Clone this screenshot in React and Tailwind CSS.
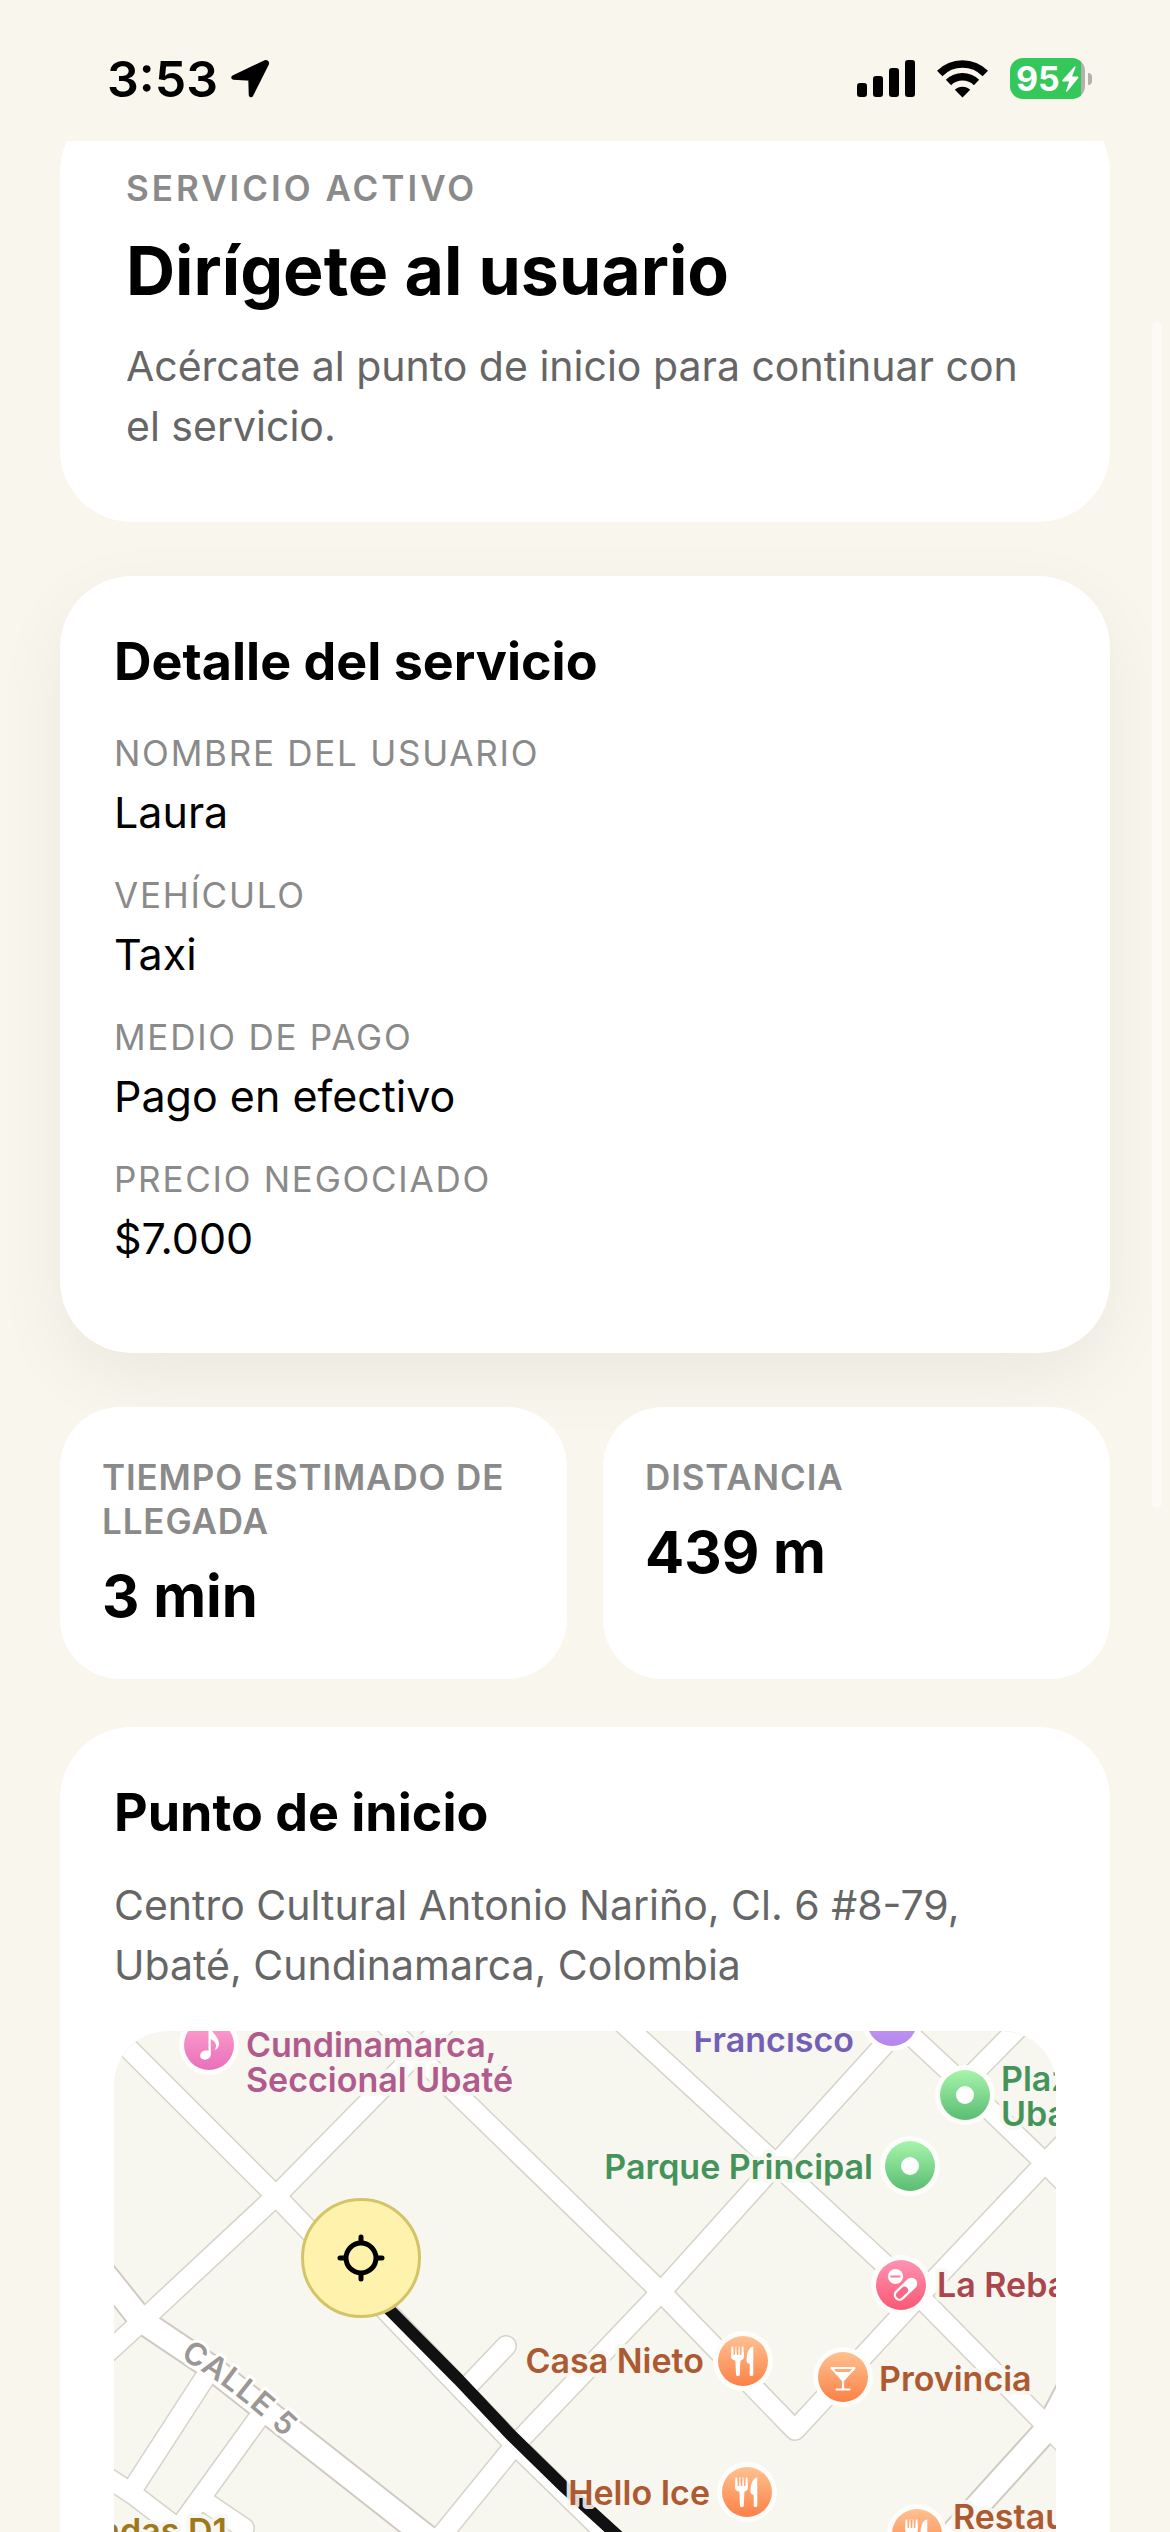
import React from 'react';

const details = [
  { label: 'Nombre del usuario', value: 'Laura' },
  { label: 'Vehículo', value: 'Taxi' },
  { label: 'Medio de pago', value: 'Pago en efectivo' },
  { label: 'Precio negociado', value: '$7.000' },
];

const stats = [
  { label: 'Tiempo estimado de llegada', value: '3 min' },
  { label: 'Distancia', value: '439 m' },
];

// Street centre lines, in map units
const streets = [
  'M-25 -22 L162 165 L401 414 L560 569',
  'M340 -16 L162 165 L28 290 L-20 334',
  'M262 -16 L547 261 L681 399 L805 265 L931 132 L960 102',
  'M310 526 L401 414 L547 261 L662 133 L790 -8',
  'M500 -16 L662 133 L805 265 L934 396 L965 428',
  'M775 -16 L849 53 L931 132 L965 166',
  'M849 53 L917 -16',
  'M392 315 L351 358',
  'M90 348 L22 453',
  'M143 389 L65 497',
  'M-12 443 L20 464 L80 510',
  'M90 470 L130 497',
];

const avenues = [
  'M-20 230 L28 290 L95 335 L151 379 L305 500 L345 531',
  'M960 348 L934 397 L867 471 L810 535',
];

const pins = [
  { x: 95, y: 14, fill: 'url(#pinPink)', icon: 'music' },
  { x: 778, y: -10, fill: 'url(#pinPurple)', icon: 'none' },
  { x: 851, y: 64, fill: 'url(#pinGreen)', icon: 'dot' },
  { x: 796, y: 135, fill: 'url(#pinGreen)', icon: 'dot' },
  { x: 787, y: 254, fill: 'url(#pinRed)', icon: 'pills' },
  { x: 629, y: 330, fill: 'url(#pinOrange)', icon: 'food' },
  { x: 729, y: 346, fill: 'url(#pinOrange)', icon: 'drink' },
  { x: 633, y: 461, fill: 'url(#pinOrange)', icon: 'food' },
  { x: 803, y: 503, fill: 'url(#pinOrange)', icon: 'food' },
];

const places = [
  { x: 132, y: 26, text: 'Cundinamarca,', fill: '#b15a8c' },
  { x: 132, y: 61, text: 'Seccional Ubaté', fill: '#b15a8c' },
  { x: 740, y: 21, text: 'Francisco', fill: '#745fb6', anchor: 'end' },
  { x: 887, y: 60, text: 'Plaza', fill: '#449459' },
  { x: 887, y: 95, text: 'Ubaté', fill: '#449459' },
  { x: 759, y: 148, text: 'Parque Principal', fill: '#449459', anchor: 'end' },
  { x: 823, y: 266, text: 'La Rebaja', fill: '#ab464c' },
  { x: 590, y: 342, text: 'Casa Nieto', fill: '#ad5a30', anchor: 'end' },
  { x: 765, y: 360, text: 'Provincia', fill: '#ad5a30' },
  { x: 596, y: 474, text: 'Hello Ice', fill: '#ad5a30', anchor: 'end' },
  { x: 839, y: 498, text: 'Restaurante', fill: '#ad5a30' },
  { x: 113, y: 512, text: 'Tiendas D1', fill: '#a0781c', anchor: 'end' },
];

function PinIcon({ name }) {
  if (name === 'dot') return <circle r="9" fill="#fff" />;
  if (name === 'music') {
    return (
      <g fill="#fff">
        <ellipse cx="-3.5" cy="10" rx="5.5" ry="4.5" transform="rotate(-20 -3.5 10)" />
        <path d="M-0.500 -18 H1.800 C2.500 -11 10 -9 10 -1 C10 2 8 4.500 5.500 5 C9 0 6 -4 1.800 -6 V10 H-0.500 Z" />
      </g>
    );
  }
  if (name === 'food') {
    return (
      <g fill="#fff">
        <path d="M-11.500 -14.500 H-9.800 L-9.300 -6 H-8 L-7.500 -14.500 H-3.500 L-3 -6 H-1.700 L-1.200 -14.500 H0.500 L1 -5 C1 -2 -0.500 -1 -2.600 -0.300 L-3.200 14 C-3.400 15.500 -6.800 15.500 -7 14 L-7.600 -0.300 C-10.200 -1 -12 -2 -12 -5 Z" />
        <path d="M-6.600 -14.500 L-6.200 -6 H-4.800 L-4.400 -14.500 Z" fill="#fda76f" />
        <path d="M10.300 -14.500 V14 C10 15.300 7 15.300 6.700 14 V3 C5 2.500 3.500 1.500 3.500 0 C3.500 -8 6 -14.500 10.300 -14.500 Z" />
      </g>
    );
  }
  if (name === 'drink') {
    return (
      <g fill="none" stroke="#fff" strokeWidth="2.200" strokeLinejoin="round" strokeLinecap="round">
        <path d="M-11.500 -9 H11.500 L0 3.500 Z" />
        <path d="M-7.500 -5 H7.500 L0 3.500 Z" fill="#fff" stroke="none" />
        <path d="M0 3 V12 M-6.500 12.500 H6.500" />
      </g>
    );
  }
  if (name === 'pills') {
    return (
      <g>
        <circle cx="-5.500" cy="-8.500" r="7.600" fill="#fff" />
        <path d="M-10.500 -8.500 H-0.500" stroke="#ff7c9a" strokeWidth="1.800" />
        <path d="M-1.500 10 L10.500 -1.500" stroke="#fff" strokeWidth="11.500" strokeLinecap="round" />
        <path d="M-1.500 10 L3.500 5.200" stroke="#fb6683" strokeWidth="7" strokeLinecap="round" />
      </g>
    );
  }
  return null;
}

function Gradient({ id, from, to }) {
  return (
    <linearGradient id={id} x1="0" y1="0" x2="0" y2="1">
      <stop offset="0" stopColor={from} />
      <stop offset="1" stopColor={to} />
    </linearGradient>
  );
}

function RouteMap() {
  return (
    <svg
      viewBox="0 0 942 780"
      preserveAspectRatio="xMidYMin slice"
      className="block w-full h-[780px] bg-[#f7f6ef]"
      role="img"
      aria-label="Mapa del punto de inicio"
    >
      <defs>
        <Gradient id="pinPink" from="#ffa2cc" to="#e86fbb" />
        <Gradient id="pinPurple" from="#d3a8ff" to="#b486ed" />
        <Gradient id="pinGreen" from="#a8f4ac" to="#59bd72" />
        <Gradient id="pinRed" from="#ff93b3" to="#f95873" />
        <Gradient id="pinOrange" from="#ffc191" to="#fb8146" />
        <path id="calle5" d="M66 327 Q120 358 174 410" />
      </defs>

      {/* Street casings first, then the white surface on top */}
      <g fill="none" strokeLinejoin="round" strokeLinecap="round">
        {avenues.map((d) => (
          <path key={d} d={d} stroke="#d0cac2" strokeWidth="27" />
        ))}
        {streets.map((d) => (
          <path key={d} d={d} stroke="#d6d3ca" strokeWidth="22" />
        ))}
        {avenues.map((d) => (
          <path key={d} d={d} stroke="#fff" strokeWidth="23" />
        ))}
        {streets.map((d) => (
          <path key={d} d={d} stroke="#fff" strokeWidth="19" />
        ))}
      </g>

      {/* Route */}
      <path d="M247 250 L344 348 L396 403 L449 455 L560 556" fill="none" stroke="#111" strokeWidth="12" />

      <g fontFamily="Inter, sans-serif" stroke="#f8f7f2" strokeLinejoin="round" style={{ paintOrder: 'stroke' }}>
        <text fontSize="31" fontWeight="600" letterSpacing="1" fill="#9b9794" stroke="#fff" strokeWidth="6">
          <textPath href="#calle5">CALLE 5</textPath>
        </text>
        {places.map((p) => (
          <text
            key={p.text}
            x={p.x}
            y={p.y}
            fontSize="34"
            fontWeight="600"
            textAnchor={p.anchor || 'start'}
            fill={p.fill}
            strokeWidth="8"
            strokeOpacity="0.9"
          >
            {p.text}
          </text>
        ))}
      </g>

      {pins.map((p) => (
        <g key={`${p.x}-${p.y}`} transform={`translate(${p.x} ${p.y})`}>
          <circle r="30" fill="#fdfdfb" />
          <circle r="25" fill={p.fill} />
          <PinIcon name={p.icon} />
        </g>
      ))}

      {/* Pickup marker */}
      <g transform="translate(247 227)">
        <circle r="58.500" fill="#fff2ac" stroke="#d4c468" strokeWidth="3" />
        <g fill="none" stroke="#000" strokeWidth="5" strokeLinecap="round">
          <circle r="15" />
          <path d="M0 -21 V-16 M0 21 V16 M-21 0 H-16 M21 0 H16" />
        </g>
      </g>
    </svg>
  );
}

function StatusBar() {
  return (
    <header className="flex h-[141px] shrink-0 items-center justify-between pl-[107px] pr-[78px] pt-4">
      <div className="flex items-center gap-3">
        <span className="text-[50px] leading-[60px] font-semibold">3:53</span>
        <svg width="40" height="40" viewBox="0 0 40 40" aria-hidden="true">
          <path
            d="M3.500 18.500 L35 3.500 C36.500 3 37.300 3.800 36.600 5 L21 36 L20.500 19.500 L3.500 18.500 Z"
            stroke="#000"
            strokeWidth="4.500"
            strokeLinejoin="round"
          />
        </svg>
      </div>

      <div className="flex items-center gap-[22px]">
        <svg width="58" height="38" viewBox="0 0 58 38" aria-hidden="true">
          <rect x="0" y="23" width="10" height="14" rx="3" />
          <rect x="16" y="16" width="10" height="21" rx="3" />
          <rect x="32" y="8" width="10" height="29" rx="3" />
          <rect x="48" y="0" width="10" height="37" rx="3" />
        </svg>
        <svg width="51" height="38" viewBox="0 0 51 38" aria-hidden="true">
          <g fill="none" stroke="#000" strokeWidth="7.500">
            <path d="M2.700 13.500 A32 32 0 0 1 48.300 13.500" />
            <path d="M11.500 22.500 A20 20 0 0 1 39.500 22.500" />
          </g>
          <path d="M25.500 37.500 L17.800 29.800 A11 11 0 0 1 33.200 29.800 Z" />
        </svg>
        <div className="flex items-center gap-[3px]">
          <div className="flex h-[41px] w-[75px] items-center gap-[2px] rounded-[13px] bg-[linear-gradient(to_right,#34c759_71px,#b3b1ac_71px)] pl-[6px] text-white">
            <span className="text-[34px] leading-none font-bold">95</span>
            <svg width="17" height="26" viewBox="0 0 17 26" fill="#fff" aria-hidden="true">
              <path d="M12.500 0.500 L0.500 14 C0 15 0.300 15.500 1.200 15.500 H7.200 L4 25 C4 26 5 26 5.500 25.300 L16.300 12 C16.800 11 16.400 10.500 15.500 10.500 H10 L13.500 1.500 C13.700 0.500 13.200 0 12.500 0.500 Z" />
            </svg>
          </div>
          <div className="h-3 w-1 rounded-r-full bg-[#b3b1ac]"></div>
        </div>
      </div>
    </header>
  );
}

export default function App() {
  return (
    <div className="relative flex h-screen flex-col overflow-hidden bg-[#f9f6ee] font-['Inter',sans-serif] text-black">
      <StatusBar />

      <main className="min-h-0 flex-1 overflow-hidden px-[60px]">
        {/* Scrolled a little, so the first card slides under the status bar */}
        <section className="-mt-[41px] rounded-[72px] bg-white p-[66px]">
          <p className="text-[35px] leading-[44px] font-semibold tracking-[3px] text-[#8a8a8a] uppercase">
            Servicio activo
          </p>
          <h1 className="mt-[18px] text-[68px] leading-[84px] font-bold">Dirígete al usuario</h1>
          <p className="mt-6 text-[41px] leading-[60px] text-[#666]">
            Acércate al punto de inicio para continuar con el servicio.
          </p>
        </section>

        <section className="mt-[54px] rounded-[72px] bg-white p-[54px] shadow-[0_24px_72px_rgba(0,0,0,0.06)]">
          <h2 className="text-[52px] leading-[64px] font-bold">Detalle del servicio</h2>
          <dl className="mt-[37px]">
            {details.map((item) => (
              <div key={item.label} className="mb-[34px]">
                <dt className="text-[35px] leading-[44px] tracking-wider text-[#8a8a8a] uppercase">{item.label}</dt>
                <dd className="mt-[10px] text-[43px] leading-[54px]">{item.value}</dd>
              </div>
            ))}
          </dl>
        </section>

        <section className="mt-[54px] grid grid-cols-2 gap-9">
          {stats.map((item) => (
            <div key={item.label} className="rounded-[60px] bg-white px-[42px] py-12">
              <p className="text-[35px] leading-[44px] font-semibold tracking-wide text-[#8a8a8a] uppercase">
                {item.label}
              </p>
              <p className="mt-[18px] text-[58px] leading-[70px] font-bold">{item.value}</p>
            </div>
          ))}
        </section>

        <section className="mt-12 rounded-[72px] bg-white p-[54px]">
          <h2 className="text-[52px] leading-[64px] font-bold">Punto de inicio</h2>
          <p className="mt-[30px] text-[41px] leading-[60px] text-[#666]">
            Centro Cultural Antonio Nariño, Cl. 6 #8-79, Ubaté, Cundinamarca, Colombia
          </p>
          <div className="mt-9 overflow-hidden rounded-[54px]">
            <RouteMap />
          </div>
        </section>
      </main>

      {/* Scroll indicator */}
      <div className="absolute top-[322px] right-2 h-[1186px] w-[10px] rounded-full bg-[#fbfaf6]"></div>
    </div>
  );
}
